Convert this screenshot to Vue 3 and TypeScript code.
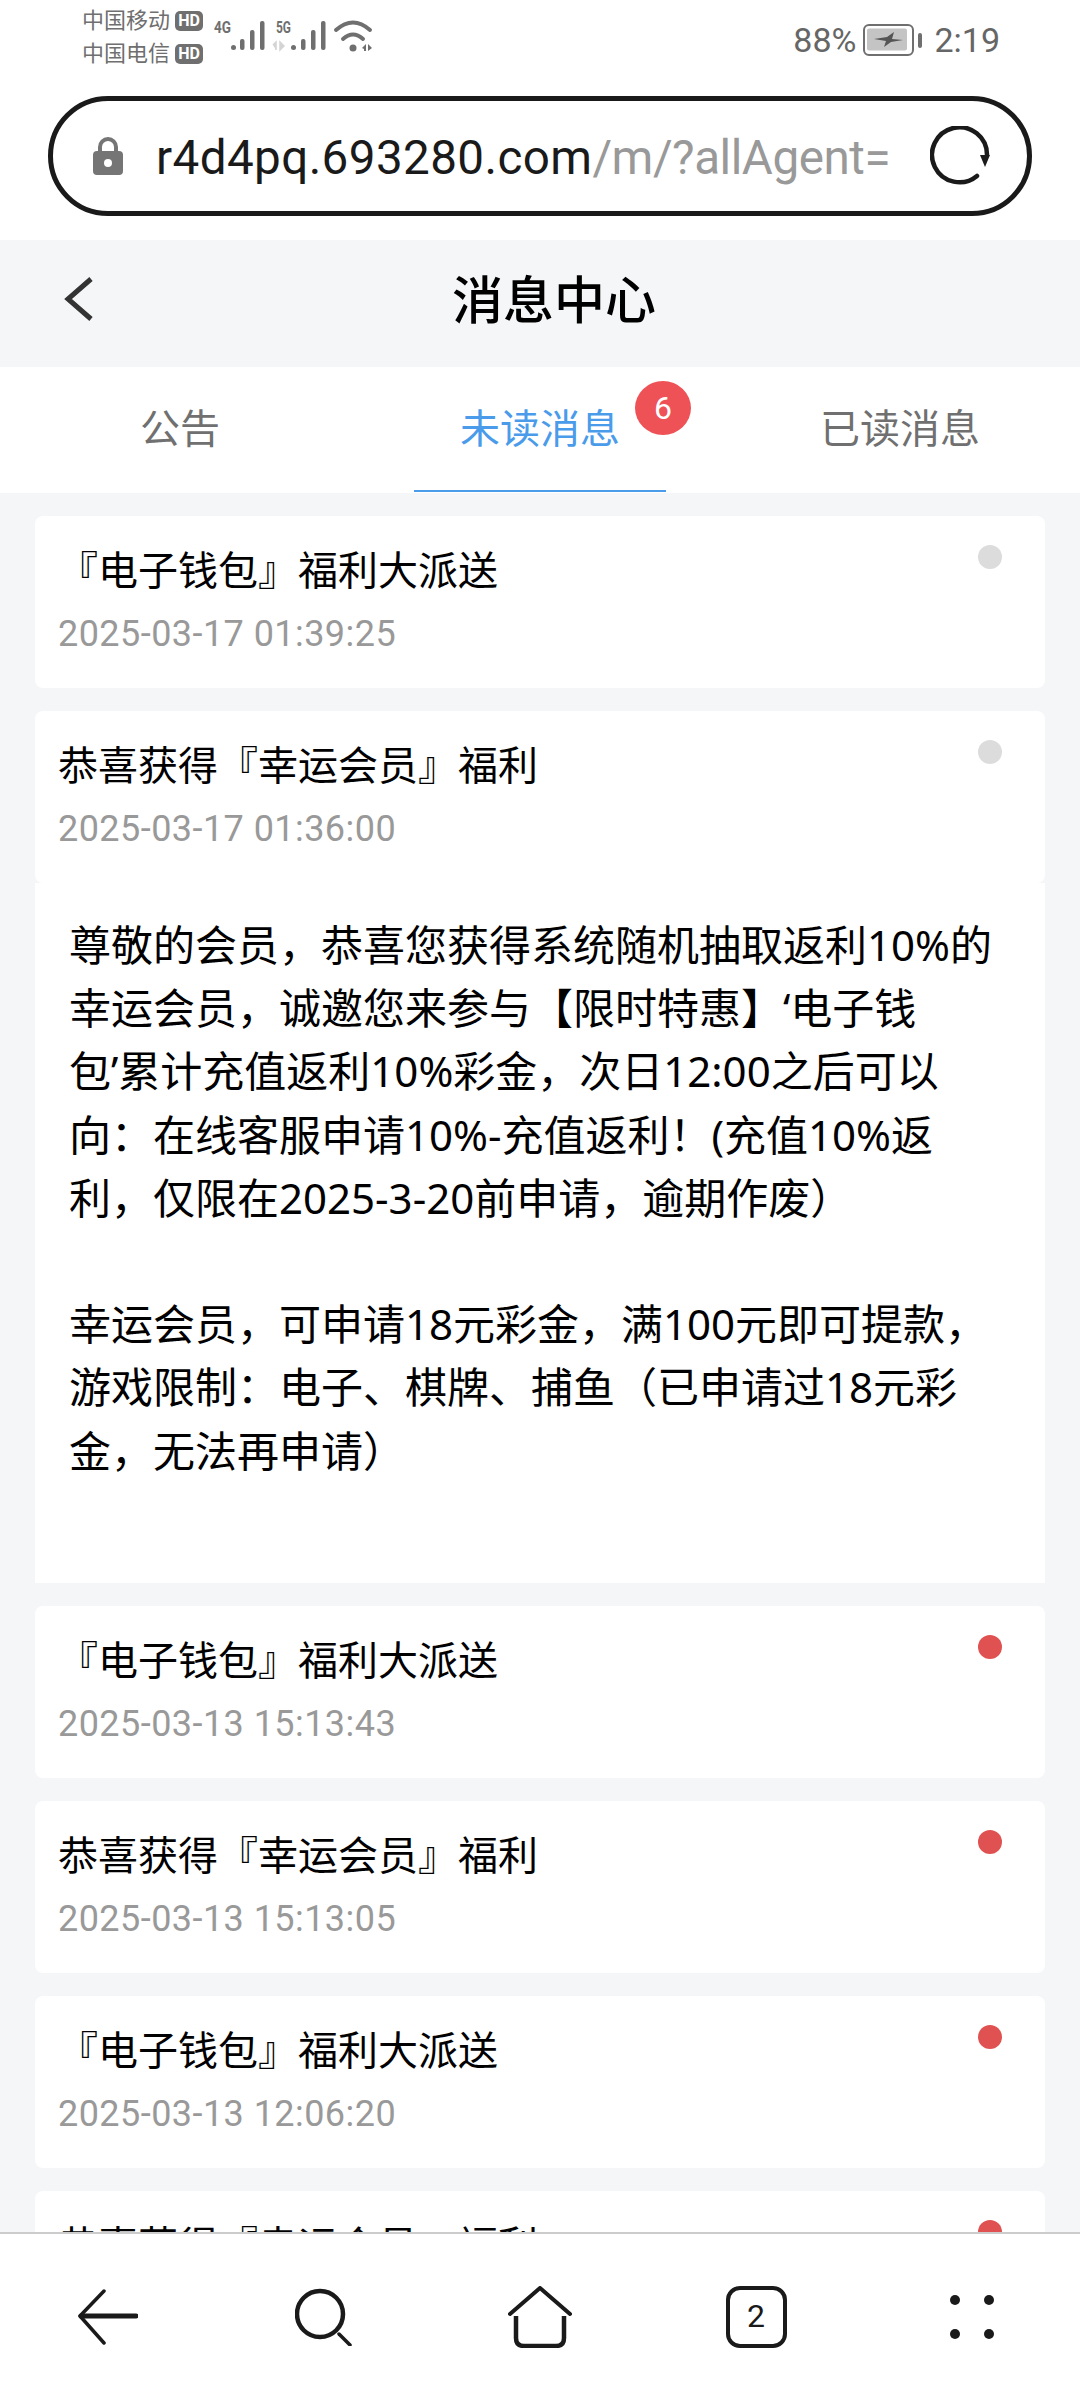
<script setup lang="ts">
interface Message {
  title: string
  time: string
  read: boolean
  open?: boolean
}

const tabs = ['公告', '未读消息', '已读消息']
const activeTab = 1

const detailText = `尊敬的会员，恭喜您获得系统随机抽取返利10%的
幸运会员，诚邀您来参与【限时特惠】‘电子钱
包’累计充值返利10%彩金，次日12:00之后可以
向：在线客服申请10%-充值返利！(充值10%返
利，仅限在2025-3-20前申请，逾期作废）

幸运会员，可申请18元彩金，满100元即可提款，
游戏限制：电子、棋牌、捕鱼（已申请过18元彩
金，无法再申请）`

const messages: Message[] = [
  { title: '『电子钱包』福利大派送', time: '2025-03-17 01:39:25', read: true },
  { title: '恭喜获得『幸运会员』福利', time: '2025-03-17 01:36:00', read: true, open: true },
  { title: '『电子钱包』福利大派送', time: '2025-03-13 15:13:43', read: false },
  { title: '恭喜获得『幸运会员』福利', time: '2025-03-13 15:13:05', read: false },
  { title: '『电子钱包』福利大派送', time: '2025-03-13 12:06:20', read: false },
  { title: '恭喜获得『幸运会员』福利', time: '2025-03-13 12:05:48', read: false },
]
</script>

<template>
  <div class="phone">
    <div class="statusbar">
      <div class="carriers">
        <div class="carrier">中国移动<span class="hd">HD</span></div>
        <div class="carrier">中国电信<span class="hd">HD</span></div>
      </div>
      <svg class="signal" width="160" height="36" viewBox="0 0 160 36">
        <text x="0" y="15" class="net" textLength="17" lengthAdjust="spacingAndGlyphs">4G</text>
        <g fill="#6f6f6f">
          <rect x="17" y="27" width="5" height="5" rx="2.5" />
          <rect x="26" y="21" width="4.5" height="11" rx="2" />
          <rect x="36" y="12" width="4.5" height="20" rx="2" />
          <rect x="46" y="3" width="4.5" height="29" rx="2" />
        </g>
        <text x="62" y="15" class="net" textLength="15" lengthAdjust="spacingAndGlyphs">5G</text>
        <path d="M62 32 V24 L59 27 M66 24 V32 L70 28 Z" fill="#d4d4d4" stroke="#d4d4d4" stroke-width="1.5" />
        <g fill="#6f6f6f">
          <rect x="77" y="27" width="5" height="5" rx="2.5" />
          <rect x="87" y="21" width="4.5" height="11" rx="2" />
          <rect x="97" y="12" width="4.5" height="20" rx="2" />
          <rect x="107" y="3" width="4.5" height="29" rx="2" />
        </g>
        <g fill="none" stroke="#6f6f6f" stroke-width="4" stroke-linecap="round">
          <path d="M122 12 Q139 -3 156 12" />
          <path d="M129 21 Q139 12 149 21" />
        </g>
        <circle cx="139" cy="30" r="3.5" fill="#6f6f6f" />
        <path d="M148 30 L152 26 V33 H150 V31 Z M154 26 L158 30 L154 33 Z" fill="#6f6f6f" />
      </svg>
      <div class="status-right">
        <span>88%</span>
        <svg class="battery" width="60" height="32" viewBox="0 0 60 32">
          <rect x="1" y="1" width="49" height="30" rx="5" fill="none" stroke="#6f6f6f" stroke-width="2" />
          <rect x="4" y="4.5" width="40" height="22" rx="2" fill="#c4c4c4" />
          <path d="M11 15 L24 13 L31 8 L29 15 L40 16 L28 18 L21 23 L23 17 Z" fill="#555" />
          <rect x="55" y="9" width="4" height="15" rx="2" fill="#6f6f6f" />
        </svg>
        <span>2:19</span>
      </div>
    </div>

    <div class="addressbar">
      <div class="url-box">
        <svg class="lock" width="30" height="40" viewBox="0 0 30 40">
          <path d="M7 17 V11 A8 8 0 0 1 23 11 V17" fill="none" stroke="#757575" stroke-width="4" />
          <rect x="0" y="15" width="30" height="24" rx="4" fill="#757575" />
          <circle cx="15" cy="27" r="4" fill="#fff" />
        </svg>
        <div class="url"><span class="host">r4d4pq.693280.com</span><span class="path">/m/?allAgent=</span></div>
        <svg class="reload" width="60" height="60" viewBox="0 0 60 60">
          <path d="M47 50 A27.5 27.5 0 1 1 57 29" fill="none" stroke="#1a1a1a" stroke-width="4.5" stroke-linecap="round" />
          <path d="M50 29 L60 29 L55 41 Z" fill="#1a1a1a" />
        </svg>
      </div>
    </div>

    <header class="navbar">
      <svg class="back" width="30" height="46" viewBox="0 0 30 46">
        <path d="M27 3 L4 23 L27 43" fill="none" stroke="#333" stroke-width="5" />
      </svg>
      <h1>消息中心</h1>
    </header>

    <nav class="tabs">
      <div v-for="(tab, i) in tabs" :key="tab" class="tab" :class="{ active: i === activeTab }">
        <span class="tab-label">{{ tab }}<span v-if="i === activeTab" class="badge">6</span></span>
      </div>
    </nav>

    <main class="list">
      <article v-for="msg in messages" :key="msg.time" class="item">
        <div class="card">
          <div class="title">{{ msg.title }}</div>
          <div class="time">{{ msg.time }}</div>
          <span class="dot" :class="{ unread: !msg.read }"></span>
        </div>
        <div v-if="msg.open" class="detail">{{ detailText }}</div>
      </article>
    </main>

    <footer class="toolbar">
      <svg width="60" height="56" viewBox="0 0 60 56">
        <path d="M26 2 L2 27 L26 54" fill="none" stroke="#1a1a1a" stroke-width="3.5" stroke-linecap="round" stroke-linejoin="round" />
        <path d="M3 27 H58" fill="none" stroke="#1a1a1a" stroke-width="5" stroke-linecap="round" />
      </svg>
      <svg width="58" height="58" viewBox="0 0 58 58">
        <circle cx="25" cy="26" r="23" fill="none" stroke="#1a1a1a" stroke-width="4.5" />
        <path d="M44 46 L55 57" fill="none" stroke="#1a1a1a" stroke-width="3.5" stroke-linecap="round" />
      </svg>
      <svg width="64" height="62" viewBox="0 0 64 62">
        <path d="M2 28 L32 2 L62 28" fill="none" stroke="#1a1a1a" stroke-width="4" stroke-linecap="round" stroke-linejoin="round" />
        <path d="M8 30 V52 Q8 60 16 60 H48 Q56 60 56 52 V30" fill="none" stroke="#1a1a1a" stroke-width="4.5" />
      </svg>
      <div class="tab-count">2</div>
      <div class="dots"><i></i><i></i><i></i><i></i></div>
    </footer>
  </div>
</template>

<style scoped>
.phone {
  width: 1080px;
  height: 2400px;
  overflow: hidden;
  position: relative;
  background: #f5f6f8;
  font-family: Roboto, "Noto Sans CJK SC", sans-serif;
  color: #000;
}

.statusbar {
  height: 64px;
  box-sizing: border-box;
  padding: 4px 80px 0 82px;
  display: flex;
  align-items: flex-start;
  background: #fff;
  color: #6f6f6f;
}

.carriers {
  width: 122px;
  font-size: 22px;
  line-height: 33px;
}

.carrier {
  display: flex;
  align-items: center;
  gap: 5px;
  white-space: nowrap;
}

.hd {
  font: 700 16px/20px "Roboto", sans-serif;
  width: 28px;
  height: 20px;
  text-align: center;
  background: #6f6f6f;
  color: #fff;
  border-radius: 5px;
}

.signal {
  margin: 14px 0 0 10px;
  overflow: visible;
}

.net {
  font: 700 17px "Roboto", sans-serif;
  fill: #6f6f6f;
}

.status-right {
  margin-left: auto;
  display: flex;
  align-items: center;
  height: 64px;
  margin-top: 4px;
  gap: 9px;
  font: 34px "Roboto", sans-serif;
  color: #666;
}

.battery {
  margin: 0 2px 0 -2px;
}

.addressbar {
  height: 176px;
  padding-top: 32px;
  box-sizing: border-box;
  background: #fff;
}

.url-box {
  margin-left: 48px;
  width: 984px;
  height: 120px;
  border: 5px solid #1a1a1a;
  border-radius: 60px;
  box-sizing: border-box;
  display: flex;
  align-items: center;
  padding-left: 40px;
}

.lock {
  flex: none;
  margin-right: 33px;
}

.url {
  width: 734px;
  padding-top: 3px;
  overflow: hidden;
  white-space: nowrap;
  font: 47.6px "Roboto", sans-serif;
}

.host {
  color: #1a1a1a;
  letter-spacing: 0.4px;
}

.path {
  color: #999;
  letter-spacing: -0.45px;
}

.reload {
  margin-left: 40px;
  flex: none;
}

.navbar {
  height: 127px;
  box-sizing: border-box;
  padding: 0 0 4px 28px;
  background: #f5f6f8;
  display: flex;
  align-items: center;
  justify-content: center;
  position: relative;
}

.navbar h1 {
  margin: 0;
  font-size: 51px;
  line-height: 70px;
  font-weight: 500;
}

.back {
  position: absolute;
  left: 64px;
  top: 36px;
}

.tabs {
  height: 126px;
  background: #fff;
  display: grid;
  grid-template-columns: repeat(3, 1fr);
}

.tab {
  position: relative;
  display: flex;
  align-items: center;
  justify-content: center;
  font-size: 40px;
  line-height: 56px;
  color: #707070;
}

.tab-label {
  position: relative;
}

.tab.active {
  color: #4a9bea;
}

.tab.active::after {
  content: "";
  position: absolute;
  left: 54px;
  right: 54px;
  bottom: 1px;
  height: 2px;
  background: #4a9bea;
}

.badge {
  position: absolute;
  left: 175px;
  top: -21px;
  width: 56px;
  height: 54px;
  border-radius: 50%;
  background: #ee5257;
  color: #fff;
  font: 32px/54px "Roboto", sans-serif;
  text-align: center;
}

.list {
  padding: 23px 35px 0;
  display: flex;
  flex-direction: column;
  gap: 23px;
}

.card {
  position: relative;
  height: 172px;
  padding: 28px 23px 0;
  box-sizing: border-box;
  background: #fff;
  border-radius: 8px;
}

.title {
  font-size: 40px;
  line-height: 56px;
  white-space: nowrap;
}

.time {
  margin-top: 11px;
  font-size: 36px;
  line-height: 46px;
  letter-spacing: 0.45px;
  color: #999;
}

.dot {
  position: absolute;
  right: 43px;
  top: 29px;
  width: 24px;
  height: 24px;
  border-radius: 50%;
  background: #dcdcdc;
}

.dot.unread {
  background: #e05252;
}

.detail {
  height: 700px;
  padding: 30px 34px 0;
  box-sizing: border-box;
  background: #fff;
  font-family: "Noto Sans", "Noto Sans CJK SC", sans-serif;
  font-size: 42px;
  line-height: 63.2px;
  white-space: pre;
}

.toolbar {
  position: absolute;
  left: 0;
  right: 0;
  bottom: 0;
  height: 168px;
  background: #fff;
  border-top: 2px solid #ccc;
  box-sizing: border-box;
  display: grid;
  grid-template-columns: repeat(5, 1fr);
  justify-items: center;
  align-items: center;
}

.tab-count {
  width: 61px;
  height: 62px;
  border: 4.5px solid #1a1a1a;
  border-radius: 14px;
  box-sizing: border-box;
  font: 32px/52px "Roboto", sans-serif;
  text-align: center;
  color: #1a1a1a;
}

.dots {
  display: grid;
  grid-template-columns: 10px 10px;
  gap: 24px 24px;
}

.dots i {
  width: 10px;
  height: 10px;
  border-radius: 50%;
  background: #1a1a1a;
}
</style>
